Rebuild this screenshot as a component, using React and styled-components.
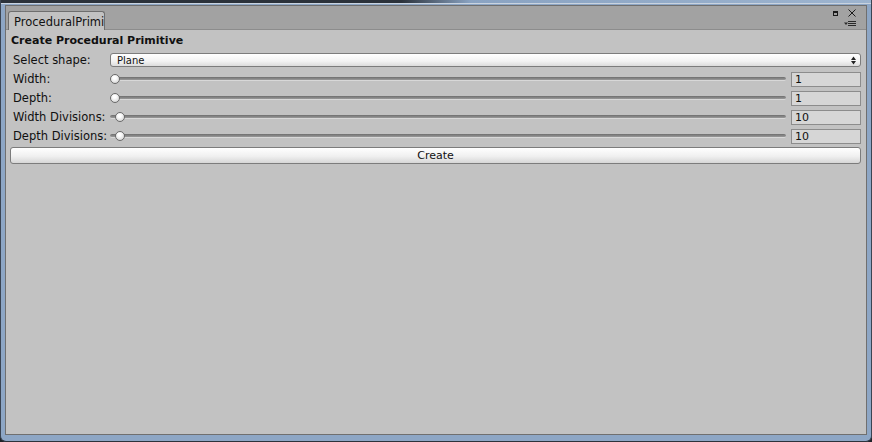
import React, { useState } from "react";
import styled, { createGlobalStyle } from "styled-components";

const GlobalStyle = createGlobalStyle`
  html, body {
    margin: 0;
    padding: 0;
    background: #1e2228;
  }
  body {
    font-family: "DejaVu Sans", Verdana, sans-serif;
    font-size: 11.5px;
    color: #101010;
  }
`;

const Frame = styled.div`
  width: 872px;
  height: 442px;
  box-sizing: border-box;
  display: flex;
  flex-direction: column;
  background: #8da6c5;
  border-left: 1px solid #3a4452;
  border-right: 1px solid #3a4452;
  border-bottom: 1px solid #2c333c;
  border-radius: 0 0 6px 6px;
  overflow: hidden;
`;

const TopStrip = styled.div`
  height: 3px;
  flex: none;
  background: linear-gradient(90deg, #2b323b 0%, #2b323b 46%, #8aa3c2 54%, #9db4cf 100%);
  border-bottom: 1px solid #c9d3df;
`;

const Window = styled.div`
  flex: 1;
  display: flex;
  flex-direction: column;
  margin: 1px 4px 6px 4px;
  border: 1px solid #6f6f6f;
  background: #c2c2c2;
`;

const TabBar = styled.div`
  height: 23px;
  flex: none;
  display: flex;
  align-items: flex-end;
  background: #a2a2a2;
  border-bottom: 1px solid #8c8c8c;
  padding-left: 2px;
  position: relative;
`;

const Tab = styled.div`
  width: 97px;
  height: 19px;
  box-sizing: border-box;
  margin-bottom: -1px;
  padding: 3px 0 0 5px;
  background: #c2c2c2;
  border: 1px solid #6e6e6e;
  border-bottom: none;
  border-radius: 3px 3px 0 0;
  overflow: hidden;
  white-space: nowrap;
  color: #111;
`;

const WindowButtons = styled.div`
  position: absolute;
  right: 10px;
  top: 3px;
  display: flex;
  flex-direction: column;
  align-items: flex-end;
  gap: 4px;
`;

const ButtonRow = styled.div`
  display: flex;
  align-items: center;
  gap: 10px;
`;

const Content = styled.div`
  flex: 1;
  display: flex;
  flex-direction: column;
  padding: 3px 5px 0 4px;
`;

const Title = styled.div`
  height: 16px;
  line-height: 16px;
  font-size: 11px;
  font-weight: bold;
  padding-left: 1px;
  margin-bottom: 3px;
`;

const Row = styled.div`
  height: 16px;
  display: flex;
  align-items: center;
  margin-bottom: 3px;
  padding-left: 3px;
`;

const Label = styled.div`
  width: 97px;
  flex: none;
  white-space: nowrap;
`;

const Dropdown = styled.div`
  flex: 1;
  height: 14px;
  box-sizing: border-box;
  display: flex;
  align-items: center;
  justify-content: space-between;
  padding: 0 4px 0 6px;
  border: 1px solid #7c7c7c;
  border-radius: 3px;
  background: linear-gradient(#ffffff, #f2f2f2 60%, #dcdcdc);
  font-size: 10px;
`;

const SliderTrack = styled.div`
  flex: 1;
  height: 16px;
  position: relative;
  margin-right: 5px;
  display: flex;
  align-items: center;
`;

const Track = styled.div`
  flex: 1;
  height: 3px;
  border-radius: 2px;
  background: linear-gradient(#6e6e6e, #9a9a9a);
  border-bottom: 1px solid #d8d8d8;
  margin-left: ${(p) => p.$inset}px;
`;

const Thumb = styled.div`
  position: absolute;
  top: 3px;
  width: 10px;
  height: 10px;
  box-sizing: border-box;
  border-radius: 50%;
  border: 1px solid #6a6a6a;
  background: radial-gradient(circle at 45% 35%, #ffffff 20%, #dedede 70%, #c4c4c4);
`;

const NumberField = styled.div`
  width: 70px;
  height: 15px;
  box-sizing: border-box;
  flex: none;
  border: 1px solid #8c8c8c;
  background: #d6d6d6;
  padding: 0 0 0 3px;
  line-height: 13px;
  font-size: 11px;
`;

const CreateButton = styled.button`
  height: 17px;
  margin: 0;
  border: 1px solid #7c7c7c;
  border-radius: 3px;
  background: linear-gradient(#ffffff, #f0f0f0 55%, #d6d6d6);
  font-family: "DejaVu Sans", Verdana, sans-serif;
  font-size: 11px;
  line-height: 14px;
  color: #111;
  padding: 0;
`;

const sliders = [
  { label: "Width:", value: 1, offset: 0, inset: 2 },
  { label: "Depth:", value: 1, offset: 0, inset: 2 },
  { label: "Width Divisions:", value: 10, offset: 5, inset: 0 },
  { label: "Depth Divisions:", value: 10, offset: 5, inset: 0 },
];

const Slider = ({ offset, inset }) => (
  <SliderTrack>
    <Track $inset={inset} />
    <Thumb style={{ left: offset }} />
  </SliderTrack>
);

const App = () => {
  const [shape] = useState("Plane");

  return (
    <>
      <GlobalStyle />
      <Frame>
        <TopStrip />
        <Window>
          <TabBar>
            <Tab>ProceduralPrimitive</Tab>
            <WindowButtons>
              <ButtonRow>
                <svg width="5" height="5" viewBox="0 0 5 5">
                  <rect x="0.5" y="0.5" width="4" height="4" fill="none" stroke="#1a1a1a" />
                  <rect x="0" y="0" width="5" height="2" fill="#1a1a1a" />
                </svg>
                <svg width="8" height="8" viewBox="0 0 8 8">
                  <path d="M0.5 0.5 L7.5 7.5 M7.5 0.5 L0.5 7.5" stroke="#1a1a1a" strokeWidth="1" />
                </svg>
              </ButtonRow>
              <svg width="12" height="6" viewBox="0 0 12 6">
                <path d="M0 1.5 L4 1.5 L2 4 Z" fill="#2a2a2a" />
                <path d="M4 0.5 H12 M4 2.5 H12 M4 4.5 H12" stroke="#2a2a2a" strokeWidth="1" />
              </svg>
            </WindowButtons>
          </TabBar>
          <Content>
            <Title>Create Procedural Primitive</Title>
            <Row>
              <Label>Select shape:</Label>
              <Dropdown>
                <span>{shape}</span>
                <svg width="5" height="9" viewBox="0 0 5 9">
                  <path d="M0 4 L2.5 0.5 L5 4 Z M0 5 L2.5 8.5 L5 5 Z" fill="#222" />
                </svg>
              </Dropdown>
            </Row>
            {sliders.map((s) => (
              <Row key={s.label}>
                <Label>{s.label}</Label>
                <Slider offset={s.offset} inset={s.inset} />
                <NumberField>{s.value}</NumberField>
              </Row>
            ))}
            <CreateButton>Create</CreateButton>
          </Content>
        </Window>
      </Frame>
    </>
  );
};

export default App;
